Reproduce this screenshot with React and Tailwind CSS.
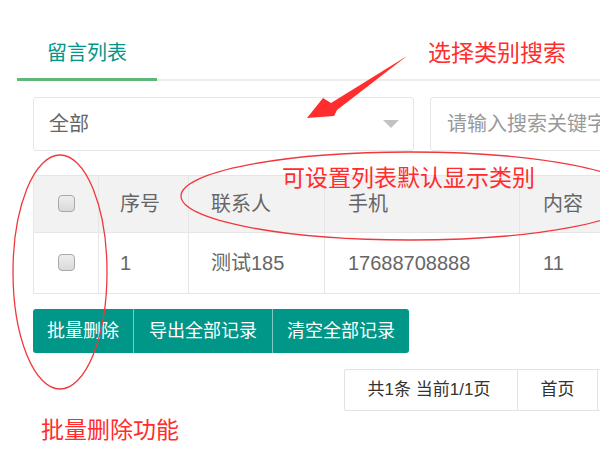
import React from 'react';

const font = { fontFamily: '"Liberation Sans", "Noto Sans CJK SC", sans-serif' };

const Checkbox = () => (
    <span className="inline-block w-[17px] h-[17px] rounded-[4px] border border-[#a9a9a9] bg-gradient-to-b from-[#eeeeee] to-[#d9d9d9]" />
);

const Annotations = () => (
    <>
        <svg className="absolute inset-0 pointer-events-none" width="600" height="450" viewBox="0 0 600 450">
            {/* arrow to the select */}
            <polygon points="307,118 323,98 331,103 407,56 337,110 334,116" fill="#ff2d2d" />
            {/* ellipse round the header */}
            <ellipse cx="410" cy="196" rx="229" ry="44" fill="none" stroke="#f0383c" strokeWidth="1.3" />
            {/* ellipse round the checkboxes */}
            <ellipse cx="60" cy="272" rx="47" ry="117" fill="none" stroke="#f0383c" strokeWidth="1.3" />
        </svg>
        <span className="absolute left-[428px] top-[38px] text-[23px] leading-[30px] text-[#ff2d2d] whitespace-nowrap">选择类别搜索</span>
        <span className="absolute left-[282px] top-[163px] text-[23px] leading-[30px] text-[#ff2d2d] whitespace-nowrap">可设置列表默认显示类别</span>
        <span className="absolute left-[41px] top-[415px] text-[23px] leading-[30px] text-[#ff2d2d] whitespace-nowrap">批量删除功能</span>
    </>
);

export default function App() {
    return (
        <div className="relative w-[600px] h-[450px] overflow-hidden bg-white" style={font}>
            {/* Tabs */}
            <div className="ml-[17px] mt-[29px] border-b-2 border-[#ececec] flex">
                <div className="w-[140px] h-[52px] pb-[2px] -mb-[2px] flex items-center justify-center text-[20px] text-[#009688] border-b-[3px] border-[#5fb878]">
                    留言列表
                </div>
            </div>

            {/* Search row */}
            <div className="ml-[33px] mt-[16px] flex gap-[16px]">
                <div className="w-[381px] h-[54px] shrink-0 border border-[#e6e6e6] rounded-[3px] flex items-center justify-between pl-[15px] pr-[14px]">
                    <span className="text-[20px] text-[#666]">全部</span>
                    <span className="w-0 h-0 border-l-[8px] border-r-[8px] border-t-[8px] border-l-transparent border-r-transparent border-t-[#c2c2c2]" />
                </div>
                <div className="w-[300px] h-[54px] shrink-0 border border-[#e6e6e6] rounded-[3px] flex items-center pl-[16px]">
                    <span className="text-[20px] text-[#999] whitespace-nowrap">请输入搜索关键字</span>
                </div>
            </div>

            {/* Table */}
            <div className="ml-[33px] mt-[24px]">
                <table className="border-collapse w-[700px] text-[20px] text-[#666] table-fixed">
                    <colgroup>
                        <col className="w-[65px]" />
                        <col className="w-[90px]" />
                        <col className="w-[136px]" />
                        <col className="w-[195px]" />
                        <col className="w-[214px]" />
                    </colgroup>
                    <thead>
                        <tr className="bg-[#f2f2f2] h-[57px]">
                            <th className="border border-[#e6e6e6] font-normal text-center align-middle pt-[2px]"><Checkbox /></th>
                            <th className="border border-[#e6e6e6] font-normal text-left pl-[21px]">序号</th>
                            <th className="border border-[#e6e6e6] font-normal text-left pl-[22px]">联系人</th>
                            <th className="border border-[#e6e6e6] font-normal text-left pl-[23px]">手机</th>
                            <th className="border border-[#e6e6e6] font-normal text-left pl-[23px]">内容</th>
                        </tr>
                    </thead>
                    <tbody>
                        <tr className="h-[61px]">
                            <td className="border border-[#e6e6e6] text-center align-middle pt-[2px]"><Checkbox /></td>
                            <td className="border border-[#e6e6e6] pl-[21px]">1</td>
                            <td className="border border-[#e6e6e6] pl-[22px]">测试185</td>
                            <td className="border border-[#e6e6e6] pl-[23px]">17688708888</td>
                            <td className="border border-[#e6e6e6] pl-[23px]">11</td>
                        </tr>
                    </tbody>
                </table>
            </div>

            {/* Action buttons */}
            <div className="ml-[33px] mt-[15px] flex">
                <button className="h-[44px] px-[14px] bg-[#009688] text-white text-[18px] rounded-l-[3px]">批量删除</button>
                <button className="h-[44px] px-[15px] bg-[#009688] text-white text-[18px] border-l border-white/50">导出全部记录</button>
                <button className="h-[44px] px-[14px] bg-[#009688] text-white text-[18px] border-l border-white/50 rounded-r-[3px]">清空全部记录</button>
            </div>

            {/* Pagination */}
            <div className="ml-[344px] mt-[16px] flex h-[42px] text-[17px] text-[#333]">
                <div className="w-[174px] shrink-0 border border-[#e2e2e2] rounded-l-[2px] flex items-center justify-center whitespace-nowrap pr-[4px]">共1条 当前1/1页</div>
                <div className="w-[80px] shrink-0 border border-l-0 border-[#e2e2e2] flex items-center justify-center">首页</div>
                <div className="w-[80px] shrink-0 border border-l-0 border-[#e2e2e2]" />
            </div>

            <Annotations />
        </div>
    );
}
